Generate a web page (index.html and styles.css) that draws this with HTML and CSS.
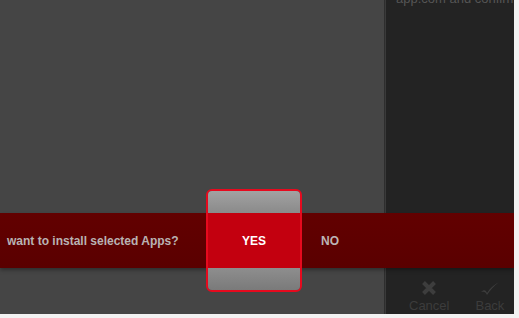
FILE: index.html
```html
<!DOCTYPE html>
<html>
<head>
<meta charset="utf-8">
<link rel="stylesheet" href="styles.css">
</head>
<body>
<div class="screen">
  <div class="main"></div>
  <div class="side">
    <div class="side-text">app.com and confirm</div>
    <div class="side-spacer"></div>
    <div class="actions">
      <div class="action">
        <svg class="icon" width="16" height="16" viewBox="0 0 16 16"><path d="M2.5 2.5 L13.5 13.5 M13.5 2.5 L2.5 13.5" stroke="#3d3d3d" stroke-width="4" stroke-linecap="butt"/></svg>
        <span class="label">Cancel</span>
      </div>
      <div class="action">
        <svg class="icon" width="22" height="16" viewBox="0 0 22 16"><path d="M2 12 C5 9 7 10 8 13 C11 8 15 5 20 2 C15 6 11 10 8 15 C7 12 5 11 2 12 Z" fill="#3d3d3d"/></svg>
        <span class="label">Back</span>
      </div>
    </div>
  </div>
  <div class="dialog">
    <div class="msg">want to install selected Apps?</div>
    <div class="yes">
      <div class="yes-top"></div>
      <div class="yes-mid">YES</div>
      <div class="yes-bot"></div>
    </div>
    <div class="no">NO</div>
  </div>
</div>
</body>
</html>
```
FILE: styles.css
```css
html, body {
  margin: 0;
  padding: 0;
  background: #f2f2f2;
}
body {
  font-family: "Liberation Sans", Arial, sans-serif;
}
.screen {
  position: relative;
  width: 514px;
  height: 314px;
  display: flex;
  overflow: hidden;
}
.main {
  width: 384px;
  flex-shrink: 0;
  background: #454545;
}
.side {
  flex: 1;
  min-width: 0;
  background: #232323;
  border-left: 1px solid #2e2e2e;
  display: flex;
  flex-direction: column;
  box-shadow: inset 1px 0 0 #3a3a3a;
  overflow: hidden;
}
.side-text {
  margin-top: -9px;
  padding-left: 11px;
  font-size: 13px;
  line-height: 16px;
  color: #555555;
  white-space: nowrap;
}
.side-spacer {
  flex: 1;
}
.actions {
  display: flex;
  padding: 0 0 1px 24px;
  gap: 26px;
}
.action {
  display: flex;
  flex-direction: column;
  align-items: center;
  gap: 3px;
}
.icon {
  display: block;
}
.label {
  font-size: 13px;
  color: #3c3c3c;
  line-height: 14px;
}
.dialog {
  position: absolute;
  left: 0;
  top: 213px;
  width: 514px;
  height: 55px;
  background: linear-gradient(#620000, #5a0000);
  display: flex;
  align-items: center;
  box-shadow: 0 2px 4px rgba(0,0,0,0.35);
}
.msg {
  width: 206px;
  padding-left: 7px;
  box-sizing: border-box;
  font-size: 12px;
  font-weight: bold;
  color: #b9b3b3;
  white-space: nowrap;
}
.yes {
  width: 96px;
  height: 103px;
  box-sizing: border-box;
  border: 2px solid #e60a1e;
  border-radius: 6px;
  overflow: hidden;
  display: flex;
  flex-direction: column;
  flex-shrink: 0;
}
.yes-top {
  height: 22px;
  background: linear-gradient(#a2a2a2, #8a8a8a);
}
.yes-mid {
  height: 55px;
  background: #c3000f;
  color: #ffffff;
  font-size: 12px;
  font-weight: bold;
  display: flex;
  align-items: center;
  justify-content: center;
}
.yes-bot {
  flex: 1;
  background: linear-gradient(#8e8e8e, #7a7a7a);
}
.no {
  margin-left: 19px;
  font-size: 12px;
  font-weight: bold;
  color: #bdb5b5;
}
```
